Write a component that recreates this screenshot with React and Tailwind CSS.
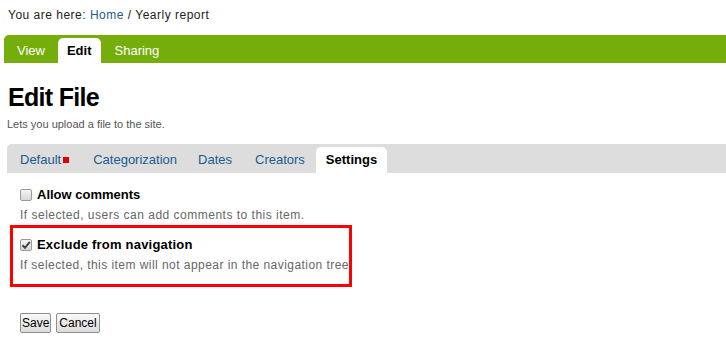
import React from "react";

function Box({ checked }) {
  return (
    <span className="inline-flex w-[12px] h-[12px] shrink-0 items-center justify-center rounded-[2px] border border-[#9a9a9a] bg-gradient-to-b from-[#f4f4f4] to-[#d8d8d8]">
      {checked && (
        <svg width="10" height="10" viewBox="0 0 10 10">
          <path d="M1.5 5.2 L4 7.8 L8.8 1.8" fill="none" stroke="#444" strokeWidth="2" />
        </svg>
      )}
    </span>
  );
}

export default function App() {
  return (
    <div className="w-[726px] h-[349px] bg-white text-[#222] overflow-hidden" style={{ fontFamily: '"Liberation Sans", Arial, sans-serif' }}>
      <div className="pl-[8px] pt-[7px] h-[35px] text-[12px] leading-[16px] text-[#222] tracking-[0.5px]">
        You are here: <span className="text-[#205c90]">Home</span> / Yearly report
      </div>
      <div className="ml-[4px] h-[28px] bg-[#75ad0a] rounded-tl-[5px] flex items-end pl-[1px] text-[13px]">
        <div className="px-[12px] h-[25px] leading-[25px] text-white">View</div>
        <div className="ml-[1px] px-[9px] h-[25px] leading-[25px] bg-white text-black font-bold rounded-t-[5px]">Edit</div>
        <div className="px-[14px] h-[25px] leading-[25px] text-white">Sharing</div>
      </div>
      <h1 className="ml-[8px] mt-[19px] text-[25px] leading-[30px] font-bold text-black tracking-[-0.7px]">Edit File</h1>
      <p className="ml-[7px] mt-[6px] text-[11px] leading-[12px] text-[#555]">Lets you upload a file to the site.</p>
      <div className="ml-[7px] mt-[14px] h-[29px] bg-[#dddddd] rounded-tl-[5px] flex items-end pl-[1px] text-[13px] text-[#205c90]">
        <div className="px-[12px] h-[26px] leading-[26px] flex items-center">
          Default<span className="ml-[2px] inline-block w-[6px] h-[6px] bg-[#e00000]"></span>
        </div>
        <div className="pl-[12px] pr-[10px] h-[26px] leading-[26px]">Categorization</div>
        <div className="pl-[11px] pr-[12px] h-[26px] leading-[26px]">Dates</div>
        <div className="px-[11px] h-[26px] leading-[26px]">Creators</div>
        <div className="px-[10px] h-[26px] leading-[26px] bg-white text-black font-bold rounded-t-[5px]">Settings</div>
      </div>
      <div className="ml-[20px] mt-[15px]">
        <div className="flex items-center gap-[5px] h-[14px]">
          <Box />
          <span className="text-[13px] font-bold text-black">Allow comments</span>
        </div>
        <div className="mt-[6px] text-[12px] leading-[14px] text-[#666] tracking-[0.5px]">If selected, users can add comments to this item.</div>
      </div>
      <div className="ml-[10px] mt-[3px] w-[342px] h-[62px] border-[3px] border-[#ff0000] pl-[7px] pt-[10px]">
        <div className="flex items-center gap-[5px] h-[14px]">
          <Box checked />
          <span className="text-[13px] font-bold text-black tracking-[0.2px]">Exclude from navigation</span>
        </div>
        <div className="mt-[6px] text-[12px] leading-[14px] text-[#666] tracking-[0.45px] whitespace-nowrap">If selected, this item will not appear in the navigation tree</div>
      </div>
      <div className="ml-[20px] mt-[26px] flex gap-[5px]">
        <button className="h-[20px] px-[1px] text-[12px] leading-[16px] text-black border border-[#8e8e8e] rounded-[2px] bg-gradient-to-b from-[#fafafa] to-[#dcdcdc]">Save</button>
        <button className="h-[20px] px-[2px] text-[12px] leading-[16px] text-black border border-[#8e8e8e] rounded-[2px] bg-gradient-to-b from-[#fafafa] to-[#dcdcdc]">Cancel</button>
      </div>
    </div>
  );
}
